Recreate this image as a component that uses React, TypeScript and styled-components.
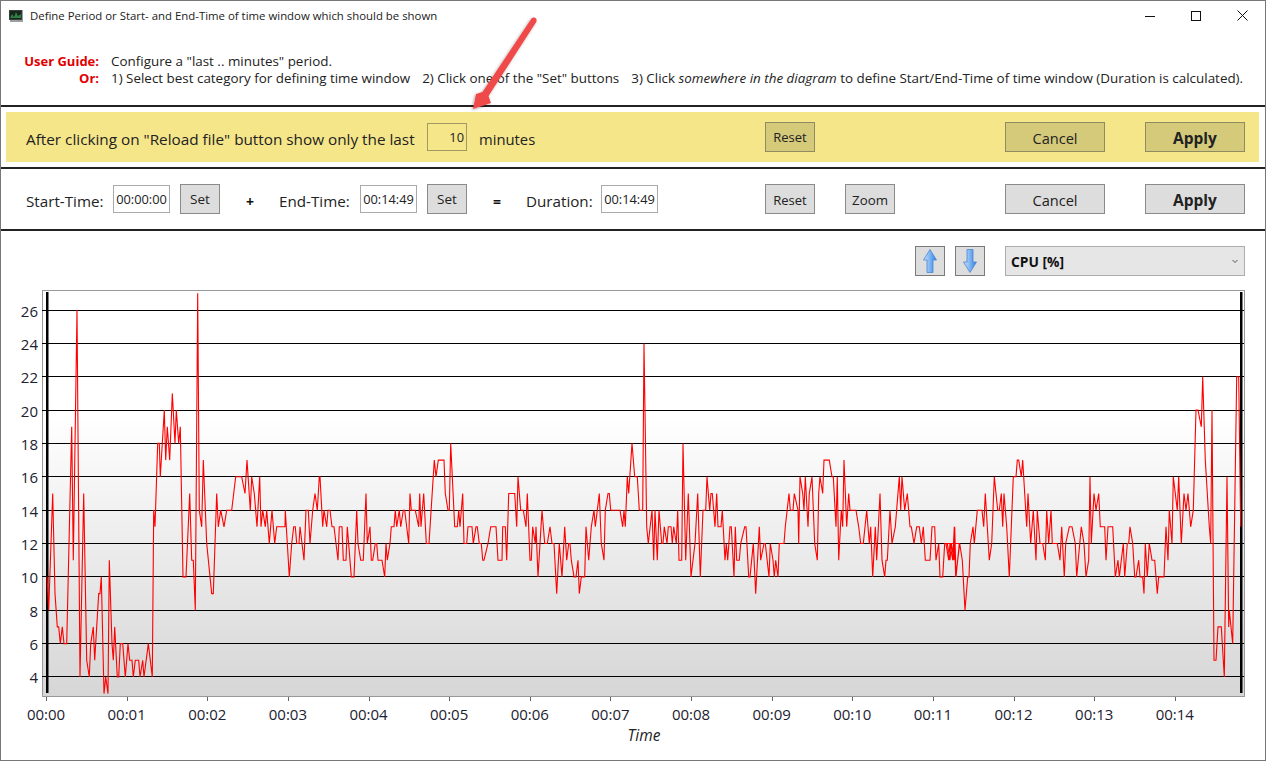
import React from "react";
import styled, { createGlobalStyle } from "styled-components";

const Global = createGlobalStyle`
  html, body { margin: 0; padding: 0; background: #fff; }
  body { font-family: "Open Sans", "Noto Sans", sans-serif; color: #111; }
`;

const Window = styled.div`
  position: relative;
  box-sizing: border-box;
  width: 1266px;
  height: 761px;
  border: 1px solid #777;
  background: #fff;
  display: flex;
  flex-direction: column;
  overflow: hidden;
`;
const TitleBar = styled.div`
  height: 29px;
  display: flex;
  align-items: center;
  padding-left: 8px;
  flex: none;
`;
const TitleText = styled.span`
  font-size: 11.4px;
  margin-left: 7px;
  color: #222;
`;
const WindowButtons = styled.div`
  margin-left: auto;
  display: flex;
  align-items: center;
  gap: 36px;
  padding-right: 17px;
`;
const Guide = styled.div`
  height: 75px;
  flex: none;
  box-sizing: border-box;
  padding-top: 23px;
  display: grid;
  grid-template-columns: 98px 1fr;
  column-gap: 12px;
  grid-auto-rows: 17px;
  font-size: 13.42px;
  line-height: 17px;
`;
const GuideLabel = styled.span`
  color: #e00000;
  font-weight: 700;
  font-size: 13px;
  text-align: right;
`;
const GuideText = styled.span`
  color: #222;
  white-space: pre;
`;
const GuideGap = styled.span`
  display: inline-block;
  width: 12px;
`;
const Rule = styled.div`
  height: 2px;
  background: #222;
  flex: none;
`;
const YellowWrap = styled.div`
  flex: none;
  height: 60px;
  box-sizing: border-box;
  padding: 5px 6px 5px 5px;
`;
const Row = styled.div<{ $yellow?: boolean; $h: number }>`
  height: ${(p) => p.$h}px;
  box-sizing: border-box;
  display: flex;
  align-items: center;
  padding-left: ${(p) => (p.$yellow ? 20 : 25)}px;
  background: ${(p) => (p.$yellow ? "#f6e68a" : "transparent")};
  flex: none;
`;
const Label = styled.span<{ $ml?: number; $w: number; $size?: number }>`
  font-size: ${(p) => p.$size ?? 15.2}px;
  width: ${(p) => p.$w}px;
  flex: none;
  margin-left: ${(p) => p.$ml ?? 0}px;
  color: #222;
  white-space: pre;
  position: relative;
  top: 2px;
`;
const Sign = styled.span<{ $ml: number; $w: number }>`
  font-size: 14px;
  font-weight: 700;
  margin-left: ${(p) => p.$ml}px;
  width: ${(p) => p.$w}px;
  text-align: center;
  color: #111;
  position: relative;
  top: 2px;
`;
const TimeInput = styled.div<{ $ml: number; $w: number; $yellow?: boolean }>`
  box-sizing: border-box;
  width: ${(p) => p.$w}px;
  height: 28px;
  flex: none;
  margin-left: ${(p) => p.$ml}px;
  border: 1px solid ${(p) => (p.$yellow ? "#a09a60" : "#aaa")};
  font-size: 12.8px;
  line-height: 26px;
  text-align: ${(p) => (p.$yellow ? "right" : "center")};
  padding-right: ${(p) => (p.$yellow ? 2 : 0)}px;
  color: #222;
  background: ${(p) => (p.$yellow ? "transparent" : "#fff")};
`;
const Btn = styled.div<{ $ml: number; $w: number; $yellow?: boolean; $size?: number; $bold?: boolean }>`
  box-sizing: border-box;
  width: ${(p) => p.$w}px;
  height: 30px;
  margin-left: ${(p) => p.$ml}px;
  flex: none;
  display: flex;
  align-items: center;
  justify-content: center;
  background: ${(p) => (p.$yellow ? "#d5ca7a" : "#dddddd")};
  border: 1px solid ${(p) => (p.$yellow ? "#8e8a62" : "#8a8a8a")};
  font-size: ${(p) => p.$size ?? 13}px;
  font-weight: ${(p) => (p.$bold ? 700 : 400)};
  color: #222;
`;
const BtnText = styled.span`
  position: relative;
  top: 1px;
`;
const ChartArea = styled.div`
  flex: 1;
  display: flex;
  flex-direction: column;
  min-height: 0;
`;
const ChartTools = styled.div`
  flex: none;
  height: 58px;
  box-sizing: border-box;
  padding: 15px 20px 0 0;
  display: flex;
  justify-content: flex-end;
  align-items: flex-start;
`;
const IconBtn = styled.div<{ $ml: number }>`
  box-sizing: border-box;
  width: 30px;
  height: 30px;
  margin-left: ${(p) => p.$ml}px;
  background: #dddddd;
  border: 1px solid #7a7a7a;
  display: flex;
  align-items: center;
  justify-content: center;
`;
const Combo = styled.div`
  box-sizing: border-box;
  width: 240px;
  height: 30px;
  margin-left: 20px;
  background: #e6e6e6;
  border: 1px solid #adadad;
  display: flex;
  align-items: center;
  justify-content: space-between;
  padding: 0 6px 0 5px;
  font-size: 13.8px;
  font-weight: 700;
  color: #111;
`;
const ChartSvg = styled.svg`
  display: block;
  flex: none;
`;
const AxisText = styled.text`
  font-family: "Open Sans", "Noto Sans", sans-serif;
  font-size: 15px;
  fill: #1c2230;
`;
const TimeText = styled.text`
  font-family: "Open Sans", "Noto Sans", sans-serif;
  font-size: 15.5px;
  font-style: italic;
  fill: #222;
`;
const ArrowOverlay = styled.svg`
  position: absolute;
  left: 459px;
  top: 5px;
  pointer-events: none;
`;

type P = [number, number];
const A: P[] = [[141,10],[146,8],[158,15],[165,9],[172,7],[176,7],[181,6],[187,7],[192,6],[200,6],[215,19],[220,11],[231,26],[240,4],[251,15],[260,5],[268,4],[272,6],[280,7],[284,5],[296,9],[300,9],[304,10],[312,3],[317,4],[324,3],[328,11],[336,6],[340,5],[344,7],[352,4],[356,4],[361,6],[368,6],[376,4],[384,6],[389,5],[396,5],[400,4],[406,5],[416,5],[420,4],[428,5],[432,4],[445,6],[457,4],[461,14],[465,13],[473,18],[478,18],[481,16],[493,20],[497,17],[502,19],[509,17],[517,21],[525,18],[529,20],[536,18],[541,19],[549,10],[558,10],[569,15],[575,11],[580,11],[586,8],[593,27],[598,14],[605,13],[610,17],[620,12],[635,9],[640,9],[650,15],[655,13],[662,14],[672,13],[680,14],[695,14],[707,16],[725,16],[735,15],[741,17],[751,14],[755,16],[763,15],[771,13],[779,16],[783,13],[788,14],[796,13],[800,14],[808,12],[816,14],[824,12],[830,13],[855,13],[856,14],[868,10],[875,12],[881,13],[886,13],[890,12],[897,12],[900,13],[912,11],[918,14],[925,14],[930,12],[938,14],[945,15],[952,14],[958,16]];
const B: P[] = [[0,16],[8,13],[12,14],[20,13],[24,14],[30,14],[36,13],[42,13],[54,11],[58,13],[66,13],[70,11],[78,11],[82,13],[94,10],[102,10],[110,14],[114,12],[122,11],[130,11],[138,15],[142,12],[150,13],[154,11],[158,11],[166,12],[170,12],[174,11],[186,11],[194,10],[198,12],[202,11],[210,12],[214,13],[222,13],[226,14],[230,13],[238,14],[242,13],[250,14],[254,14],[266,12],[270,15],[274,14],[286,14],[296,13],[299,15],[303,13],[311,15],[319,12],[327,12],[343,17],[348,16],[355,17],[372,17],[376,15],[384,14],[388,14],[392,18],[404,13],[412,13],[416,14],[420,13],[428,15],[432,12],[440,12],[444,13],[456,13],[460,12],[468,13],[472,13],[478,12],[484,12],[488,11],[492,11],[504,12],[512,13],[528,13],[534,11],[546,11],[548,13],[556,13],[560,11],[566,15],[584,15],[590,13],[594,16],[602,14],[610,14],[618,13],[622,15],[630,11],[634,11],[638,13],[646,12],[648,13],[654,10],[666,14],[674,12],[682,12],[690,13],[696,12],[702,12],[710,9],[718,12],[726,10],[734,13],[740,11],[746,12],[750,12],[754,11],[762,10],[768,10],[774,11],[778,9],[784,10],[794,10],[798,13],[806,11],[814,13],[822,14],[826,13],[838,15],[844,12],[852,11],[856,14],[864,15],[868,15],[872,14],[900,14],[908,13],[912,14],[916,13],[922,16],[926,15],[936,18],[944,16],[952,16],[958,14]];
const C: P[] = [[0,14],[8,14],[12,24],[20,13],[25,12],[36,14],[41,11],[45,14],[52,11],[57,14],[65,12],[69,12],[73,13],[81,12],[85,13],[93,13],[97,12],[101,13],[109,12],[113,14],[117,11],[125,11],[129,18],[137,11],[145,15],[153,10],[165,12],[173,15],[181,10],[189,14],[197,14],[201,16],[209,14],[213,15],[217,15],[225,13],[230,15],[234,13],[243,13],[247,14],[255,11],[259,12],[263,11],[270,13],[274,13],[282,10],[286,13],[290,11],[298,11],[302,12],[314,13],[318,13],[326,10],[330,10],[340,12],[347,9],[358,13],[362,11],[372,12],[376,12],[387,10],[391,12],[399,11],[403,10],[407,11],[414,10],[418,12],[432,12],[436,13],[447,15],[451,14],[459,14],[463,15],[474,14],[476,12],[480,16],[488,15],[492,14],[496,16],[504,13],[508,15],[516,16],[524,12],[532,11],[536,15],[540,16],[548,15],[552,17],[568,17],[576,16],[580,16],[588,13],[592,16],[596,11],[604,14],[608,13],[612,17],[620,13],[626,15],[630,14],[648,14],[656,13],[662,12],[670,12],[680,14],[688,12],[692,13],[698,10],[706,13],[710,11],[720,15],[726,11],[734,10],[738,11],[742,11],[750,14],[756,12],[766,13],[778,16],[782,14],[786,16],[794,14],[802,15],[810,13],[814,13],[822,12],[830,13],[838,13],[844,12],[850,13],[856,11],[870,11],[876,13],[884,13],[888,11],[896,12],[900,10],[908,10],[914,12],[922,12],[930,11],[934,12],[942,11],[944,13],[948,10],[958,12]];
const D: P[] = [[0,12],[8,11],[12,12],[20,11],[25,13],[29,10],[41,12],[49,11],[57,8],[65,10],[69,10],[73,12],[81,13],[85,12],[94,14],[108,14],[113,13],[118,15],[130,11],[137,12],[145,16],[155,14],[160,14],[166,15],[170,13],[174,15],[182,13],[190,10],[202,16],[210,16],[214,17],[218,17],[226,16],[230,17],[236,15],[242,13],[246,15],[254,12],[262,14],[270,11],[274,14],[282,12],[290,12],[298,11],[302,14],[308,12],[315,14],[319,12],[334,12],[342,11],[347,13],[355,10],[359,12],[370,13],[378,13],[388,12],[392,10],[406,13],[414,12],[420,10],[428,11],[432,16],[436,12],[444,15],[450,14],[458,15],[463,13],[476,13],[480,11],[486,13],[500,13],[508,10],[516,11],[520,10],[532,12],[536,10],[544,12],[548,12],[552,13],[560,12],[566,10],[570,10],[578,11],[582,10],[590,10],[594,9],[598,12],[604,10],[610,12],[618,11],[626,11],[634,9],[638,10],[654,10],[660,13],[666,11],[670,14],[678,12],[682,16],[694,14],[698,16],[706,12],[714,15],[720,14],[726,15],[734,13],[742,14],[750,20],[756,20],[766,19],[770,22],[778,17],[784,15],[790,13],[794,12],[798,20],[804,5],[810,5],[816,7],[826,7],[835,4],[843,16],[848,7],[850,8],[860,6],[866,14],[872,22],[878,22],[884,13]];

const yOf = (v: number) => 310 + (26 - v) * 16.68;
const sect = (pts: P[], base: number) =>
  pts.map(([x, v]) => `${(base + x / 3).toFixed(1)},${yOf(v).toFixed(1)}`).join(" ");
const linePoints = [sect(A, 0), sect(B, 320), sect(C, 640), sect(D, 946)].join(" ");

const gridY = [310, 343, 376, 410, 443, 476, 510, 543, 576, 610, 643, 676];
const xTicks = Array.from({ length: 15 }, (_, i) => 46 + i * 80.63);

const Chart = () => (
  <ChartSvg width={1264} height={471} viewBox="1 289 1264 471">
    <defs>
      <linearGradient id="plotBg" x1="0" y1="0" x2="0" y2="1">
        <stop offset="0.31" stopColor="#ffffff" />
        <stop offset="1" stopColor="#d6d6d6" />
      </linearGradient>
    </defs>
    <rect x="42.5" y="290.5" width="1202" height="406" fill="url(#plotBg)" stroke="#999" />
    {gridY.map((y, i) => (
      <React.Fragment key={y}>
        <line x1="42" x2="1244" y1={y + 0.5} y2={y + 0.5} stroke="#000" />
        <AxisText x="38" y={y + 7} textAnchor="end">{26 - i * 2}</AxisText>
      </React.Fragment>
    ))}
    <rect x="46" y="292" width="2.5" height="401" fill="#000" />
    <rect x="1240" y="292" width="2.5" height="401" fill="#000" />
    <polyline points={linePoints} fill="none" stroke="#ff0000" strokeWidth="1.1" strokeLinejoin="miter" />
    {xTicks.map((x, i) => (
      <React.Fragment key={x}>
        <line x1={Math.round(x) + 0.5} x2={Math.round(x) + 0.5} y1="697" y2="701" stroke="#666" />
        <AxisText x={x} y="720" textAnchor="middle">{`00:${String(i).padStart(2, "0")}`}</AxisText>
      </React.Fragment>
    ))}
    <TimeText x="644" y="741" textAnchor="middle">Time</TimeText>
  </ChartSvg>
);

const AppIcon = () => (
  <svg width="14" height="12" viewBox="0 0 14 12">
    <rect x="1" y="0" width="13" height="12" fill="#9aa09c" />
    <rect x="0" y="0" width="13" height="10" fill="#35403a" />
    <rect x="1" y="1" width="11" height="8" fill="#16261c" />
    <path d="M1 8 L3 4 L5 7 L7 2 L9 6 L12 4 L12 8 Z" fill="#2f7d45" />
  </svg>
);

const ArrowGrad = ({ id }: { id: string }) => (
  <defs>
    <linearGradient id={id} x1="0" y1="0" x2="1" y2="0">
      <stop offset="0" stopColor="#c9e2fd" />
      <stop offset="0.5" stopColor="#7db4f2" />
      <stop offset="1" stopColor="#2f7fe0" />
    </linearGradient>
  </defs>
);
const UpArrow = () => (
  <svg width="14" height="24" viewBox="0 0 14 24">
    <ArrowGrad id="arUp" />
    <path d="M7 0.5 L13.5 11 L10 11 L10 23.5 L4 23.5 L4 11 L0.5 11 Z" fill="url(#arUp)" stroke="#4a86d0" strokeWidth="0.8" />
  </svg>
);
const DownArrow = () => (
  <svg width="14" height="24" viewBox="0 0 14 24">
    <ArrowGrad id="arDn" />
    <path d="M4 0.5 L10 0.5 L10 13 L13.5 13 L7 23.5 L0.5 13 L4 13 Z" fill="url(#arDn)" stroke="#4a86d0" strokeWidth="0.8" />
  </svg>
);

export default function App() {
  return (
    <>
      <Global />
      <Window>
        <TitleBar>
          <AppIcon />
          <TitleText>Define Period or Start- and End-Time of time window which should be shown</TitleText>
          <WindowButtons>
            <svg width="10" height="10" viewBox="0 0 10 10"><path d="M0 5.5H10" stroke="#111" /></svg>
            <svg width="10" height="10" viewBox="0 0 10 10"><rect x="0.5" y="0.5" width="9" height="9" fill="none" stroke="#111" /></svg>
            <svg width="11" height="11" viewBox="0 0 11 11"><path d="M0.5 0.5L10.5 10.5M10.5 0.5L0.5 10.5" stroke="#111" /></svg>
          </WindowButtons>
        </TitleBar>
        <Guide>
          <GuideLabel>User Guide:</GuideLabel>
          <GuideText>Configure a "last .. minutes" period.</GuideText>
          <GuideLabel>Or:</GuideLabel>
          <GuideText>
            1) Select best category for defining time window<GuideGap />2) Click one of the "Set" buttons<GuideGap />3) Click <em>somewhere in the diagram</em> to define Start/End-Time of time window (Duration is calculated).
          </GuideText>
        </Guide>
        <Rule />
        <YellowWrap>
          <Row $yellow $h={50}>
            <Label $w={401} $size={15.3}>After clicking on "Reload file" button show only the last</Label>
            <TimeInput $ml={0} $w={40} $yellow>10</TimeInput>
            <Label $ml={12} $w={56} $size={14.8}>minutes</Label>
            <Btn $ml={230} $w={50} $yellow>Reset</Btn>
            <Btn $ml={190} $w={100} $yellow $size={14.6}><BtnText>Cancel</BtnText></Btn>
            <Btn $ml={40} $w={100} $yellow $size={15.5} $bold><BtnText>Apply</BtnText></Btn>
          </Row>
        </YellowWrap>
        <Rule />
        <Row $h={60}>
          <Label $w={87}>Start-Time:</Label>
          <TimeInput $ml={0} $w={57}>00:00:00</TimeInput>
          <Btn $ml={10} $w={40} $size={13.5}>Set</Btn>
          <Sign $ml={20} $w={20}>+</Sign>
          <Label $ml={19} $w={81}>End-Time:</Label>
          <TimeInput $ml={0} $w={57}>00:14:49</TimeInput>
          <Btn $ml={10} $w={40} $size={13.5}>Set</Btn>
          <Sign $ml={20} $w={20}>=</Sign>
          <Label $ml={19} $w={75}>Duration:</Label>
          <TimeInput $ml={0} $w={57}>00:14:49</TimeInput>
          <Btn $ml={107} $w={50}><BtnText>Reset</BtnText></Btn>
          <Btn $ml={30} $w={50} $size={13.3}><BtnText>Zoom</BtnText></Btn>
          <Btn $ml={110} $w={100} $size={14.6}><BtnText>Cancel</BtnText></Btn>
          <Btn $ml={40} $w={100} $size={15.5} $bold><BtnText>Apply</BtnText></Btn>
        </Row>
        <Rule />
        <ChartArea>
          <ChartTools>
            <IconBtn $ml={0}><UpArrow /></IconBtn>
            <IconBtn $ml={10}><DownArrow /></IconBtn>
            <Combo>
              <span>CPU [%]</span>
              <svg width="6" height="5" viewBox="0 0 6 5"><path d="M0.5 1L3 3.5L5.5 1" fill="none" stroke="#555" /></svg>
            </Combo>
          </ChartTools>
          <Chart />
        </ChartArea>
        <ArrowOverlay width="90" height="112" viewBox="0 0 90 112">
          <defs>
            <filter id="sh" x="-30%" y="-30%" width="160%" height="160%">
              <feDropShadow dx="-1" dy="1" stdDeviation="1.6" floodColor="#000" floodOpacity="0.35" />
            </filter>
          </defs>
          <path d="M71.5 12.5 Q74 10.5 76.5 13 L76.5 15.5 L28.5 90 L31 97 L13 103 L16 88 L22.5 86 Z" fill="#f04848" filter="url(#sh)" />
        </ArrowOverlay>
      </Window>
    </>
  );
}
